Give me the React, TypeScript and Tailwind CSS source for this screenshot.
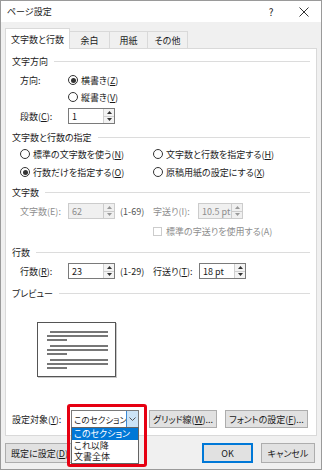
import React from 'react';

const U = ({ children }: { children: React.ReactNode }) => (
  <span className="underline underline-offset-[1px]">{children}</span>
);

function Radio({ checked }: { checked?: boolean }) {
  return (
    <span className="flex h-[10px] w-[10px] shrink-0 items-center justify-center rounded-full border border-[#333] bg-white">
      {checked && <span className="h-[5px] w-[5px] rounded-full bg-[#333]" />}
    </span>
  );
}

function Spin({ value, className, disabled }: { value: string; className: string; disabled?: boolean }) {
  return (
    <div
      className={`flex h-[16px] ${className} border ${
        disabled ? 'border-[#cccccc] bg-[#f0f0f0] text-[#8d8d8d]' : 'border-[#7a7a7a] bg-white'
      }`}
    >
      <span className="flex flex-1 items-center overflow-hidden pl-[3px]">{value}</span>
      <div className={`flex w-[11px] shrink-0 flex-col border-l ${disabled ? 'border-[#cccccc]' : 'border-[#d0d0d0]'}`}>
        <div className={`flex flex-1 items-center justify-center border-b ${disabled ? 'border-[#cccccc] bg-[#f0f0f0]' : 'border-[#d0d0d0] bg-[#f3f3f3]'}`}>
          <svg width="5" height="3" viewBox="0 0 5 3">
            <path d="M0 3 L2.5 0 L5 3 Z" fill={disabled ? '#9a9a9a' : '#333'} />
          </svg>
        </div>
        <div className={`flex flex-1 items-center justify-center ${disabled ? 'bg-[#f0f0f0]' : 'bg-[#f3f3f3]'}`}>
          <svg width="5" height="3" viewBox="0 0 5 3">
            <path d="M0 0 L2.5 3 L5 0 Z" fill={disabled ? '#9a9a9a' : '#333'} />
          </svg>
        </div>
      </div>
    </div>
  );
}

function Header({ label, className }: { label: string; className: string }) {
  return (
    <div className={`flex h-[14px] items-center pl-[6px] pr-[6px] ${className}`}>
      <span>{label}</span>
      <span className="ml-[6px] h-px flex-1 bg-[#dcdcdc]" />
    </div>
  );
}

function PreviewLines() {
  return (
    <div className="flex flex-col">
      <div className="ml-[3px] h-[2px] bg-[#777]" />
      <div className="mt-[2px] h-[2px] bg-[#777]" />
      <div className="mt-[2px] h-[2px] w-[20px] bg-[#777]" />
    </div>
  );
}

export default function App() {
  return (
    <div className="relative h-[470px] w-[322px] overflow-hidden whitespace-nowrap border border-[#9a9a9a] bg-[#f0f0f0] font-['Noto_Sans_CJK_JP',sans-serif] text-[9px] leading-none text-[#1a1a1a] [font-feature-settings:'palt']">
      {/* タイトルバー */}
      <div className="flex h-[21px] items-center bg-white pl-[6px] pr-[7px]">
        <span className="text-[#222]">ページ設定</span>
        <span className="ml-auto w-[20px] text-center text-[10px]">?</span>
        <span className="ml-[13px] flex w-[20px] justify-center">
          <svg width="10" height="10" viewBox="0 0 10 10">
            <path d="M0.5 0.5 L9.5 9.5 M9.5 0.5 L0.5 9.5" stroke="#333" strokeWidth="1" />
          </svg>
        </span>
      </div>

      <div className="px-[4px]">
        {/* タブ */}
        <div className="flex h-[26px] items-end">
          <div className="relative z-10 -mb-px flex h-[21px] w-[65px] items-center justify-center border border-b-0 border-[#d9d9d9] bg-white">
            文字数と行数
          </div>
          <div className="flex h-[17px] w-[40px] items-center justify-center border-r border-t border-[#d9d9d9]">余白</div>
          <div className="flex h-[17px] w-[38px] items-center justify-center border-r border-t border-[#d9d9d9]">用紙</div>
          <div className="flex h-[17px] w-[40px] items-center justify-center border-r border-t border-[#d9d9d9]">その他</div>
        </div>

        {/* タブパネル */}
        <div className="flex h-[388px] w-[312px] flex-col border border-[#d9d9d9] bg-white">
          <Header label="文字方向" className="mt-[5px]" />
          <div className="mt-[4px] flex h-[16px] items-center pl-[14px]">
            <span className="w-[48px]">方向:</span>
            <Radio checked />
            <span className="ml-[3px]">
              横書き(<U>Z</U>)
            </span>
          </div>
          <div className="mt-[1px] flex h-[16px] items-center pl-[62px]">
            <Radio />
            <span className="ml-[3px]">
              縦書き(<U>V</U>)
            </span>
          </div>
          <div className="mt-[3px] flex h-[16px] items-center pl-[14px]">
            <span className="w-[48px]">
              段数(<U>C</U>):
            </span>
            <Spin value="1" className="w-[47px]" />
          </div>

          <Header label="文字数と行数の指定" className="mt-[6px]" />
          <div className="mt-[2px] flex h-[16px] items-center pl-[14px]">
            <div className="flex w-[133px] items-center">
              <Radio />
              <span className="ml-[3px]">
                標準の文字数を使う(<U>N</U>)
              </span>
            </div>
            <Radio />
            <span className="ml-[3px]">
              文字数と行数を指定する(<U>H</U>)
            </span>
          </div>
          <div className="mt-[2px] flex h-[16px] items-center pl-[14px]">
            <div className="flex w-[133px] items-center">
              <Radio checked />
              <span className="ml-[3px]">
                行数だけを指定する(<U>O</U>)
              </span>
            </div>
            <Radio />
            <span className="ml-[3px]">
              原稿用紙の設定にする(<U>X</U>)
            </span>
          </div>

          <Header label="文字数" className="mt-[5px]" />
          <div className="mt-[4px] flex h-[16px] items-center pl-[14px]">
            <span className="w-[48px] text-[#8d8d8d]">文字数(E):</span>
            <Spin value="62" className="w-[47px]" disabled />
            <span className="ml-[5px] w-[33px] text-[#555]">(1-69)</span>
            <span className="w-[45px] text-[#8d8d8d]">字送り(I):</span>
            <Spin value="10.5 pt" className="w-[45px]" disabled />
          </div>
          <div className="mt-[4px] flex h-[16px] items-center pl-[147px]">
            <span className="h-[9px] w-[9px] border border-[#cccccc] bg-white" />
            <span className="ml-[4px] text-[#8d8d8d]">標準の字送りを使用する(A)</span>
          </div>

          <Header label="行数" className="mt-[6px]" />
          <div className="mt-[4px] flex h-[16px] items-center pl-[14px]">
            <span className="w-[48px]">
              行数(<U>R</U>):
            </span>
            <Spin value="23" className="w-[47px]" />
            <span className="ml-[5px] w-[33px]">(1-29)</span>
            <span className="w-[46px]">
              行送り(<U>T</U>):
            </span>
            <Spin value="18 pt" className="w-[47px]" />
          </div>

          <Header label="プレビュー" className="mt-[7px]" />
          <div className="ml-[31px] mt-[22px] flex h-[55px] w-[79px] flex-col gap-[4px] border border-[#555] bg-white pl-[9px] pr-[7px] pt-[8px] shadow-[1px_1px_0_#c8c8c8]">
            <PreviewLines />
            <PreviewLines />
            <PreviewLines />
          </div>

          <div className="mt-[33px] flex h-[18px] items-center pl-[6px]">
            <span className="w-[59px]">
              設定対象(<U>Y</U>):
            </span>
            <div className="relative z-20 flex h-[18px] w-[68px] border border-[#7a7a7a] bg-white">
              <span className="flex flex-1 items-center overflow-hidden pl-[2px] text-[8.5px]">このセクション</span>
              <span className="flex w-[12px] shrink-0 items-center justify-center border-l border-[#3c8ad6] bg-[#cce4f7]">
                <svg width="7" height="4" viewBox="0 0 7 4">
                  <path d="M0.5 0.5 L3.5 3.5 L6.5 0.5" stroke="#555" strokeWidth="1" fill="none" />
                </svg>
              </span>
              {/* ドロップダウン */}
              <div className="absolute left-[-1px] top-[16px] flex w-[68px] flex-col border border-[#646464] bg-white text-[9px]">
                <span className="flex h-[11.5px] items-center bg-[#0078d7] pl-[2px] text-white">このセクション</span>
                <span className="flex h-[11.5px] items-center pl-[2px]">これ以降</span>
                <span className="flex h-[11.5px] items-center pl-[2px]">文書全体</span>
              </div>
              {/* 強調枠 */}
              <div className="pointer-events-none absolute left-[-5px] top-[-7px] h-[63px] w-[80px] rounded-[3px] border-[3px] border-[#e60012]" />
            </div>
            <button className="ml-[10px] flex h-[18px] w-[68px] items-center justify-center border border-[#adadad] bg-[#e1e1e1]">
              グリッド線(<U>W</U>)...
            </button>
            <button className="ml-[8px] flex h-[18px] w-[83px] items-center justify-center border border-[#adadad] bg-[#e1e1e1]">
              フォントの設定(<U>F</U>)...
            </button>
          </div>
        </div>

        {/* 下部ボタン */}
        <div className="mt-[7px] flex h-[20px] items-center">
          <button className="flex h-[20px] w-[72px] items-center border border-[#adadad] bg-[#e1e1e1] pl-[5px]">
            既定に設定(<U>D</U>)
          </button>
          <button className="ml-auto flex h-[20px] w-[51px] items-center justify-center border-2 border-[#0078d7] bg-[#e1e1e1]">
            OK
          </button>
          <button className="ml-[8px] mr-[2px] flex h-[20px] w-[54px] items-center justify-center border border-[#adadad] bg-[#e1e1e1]">
            キャンセル
          </button>
        </div>
      </div>
    </div>
  );
}
